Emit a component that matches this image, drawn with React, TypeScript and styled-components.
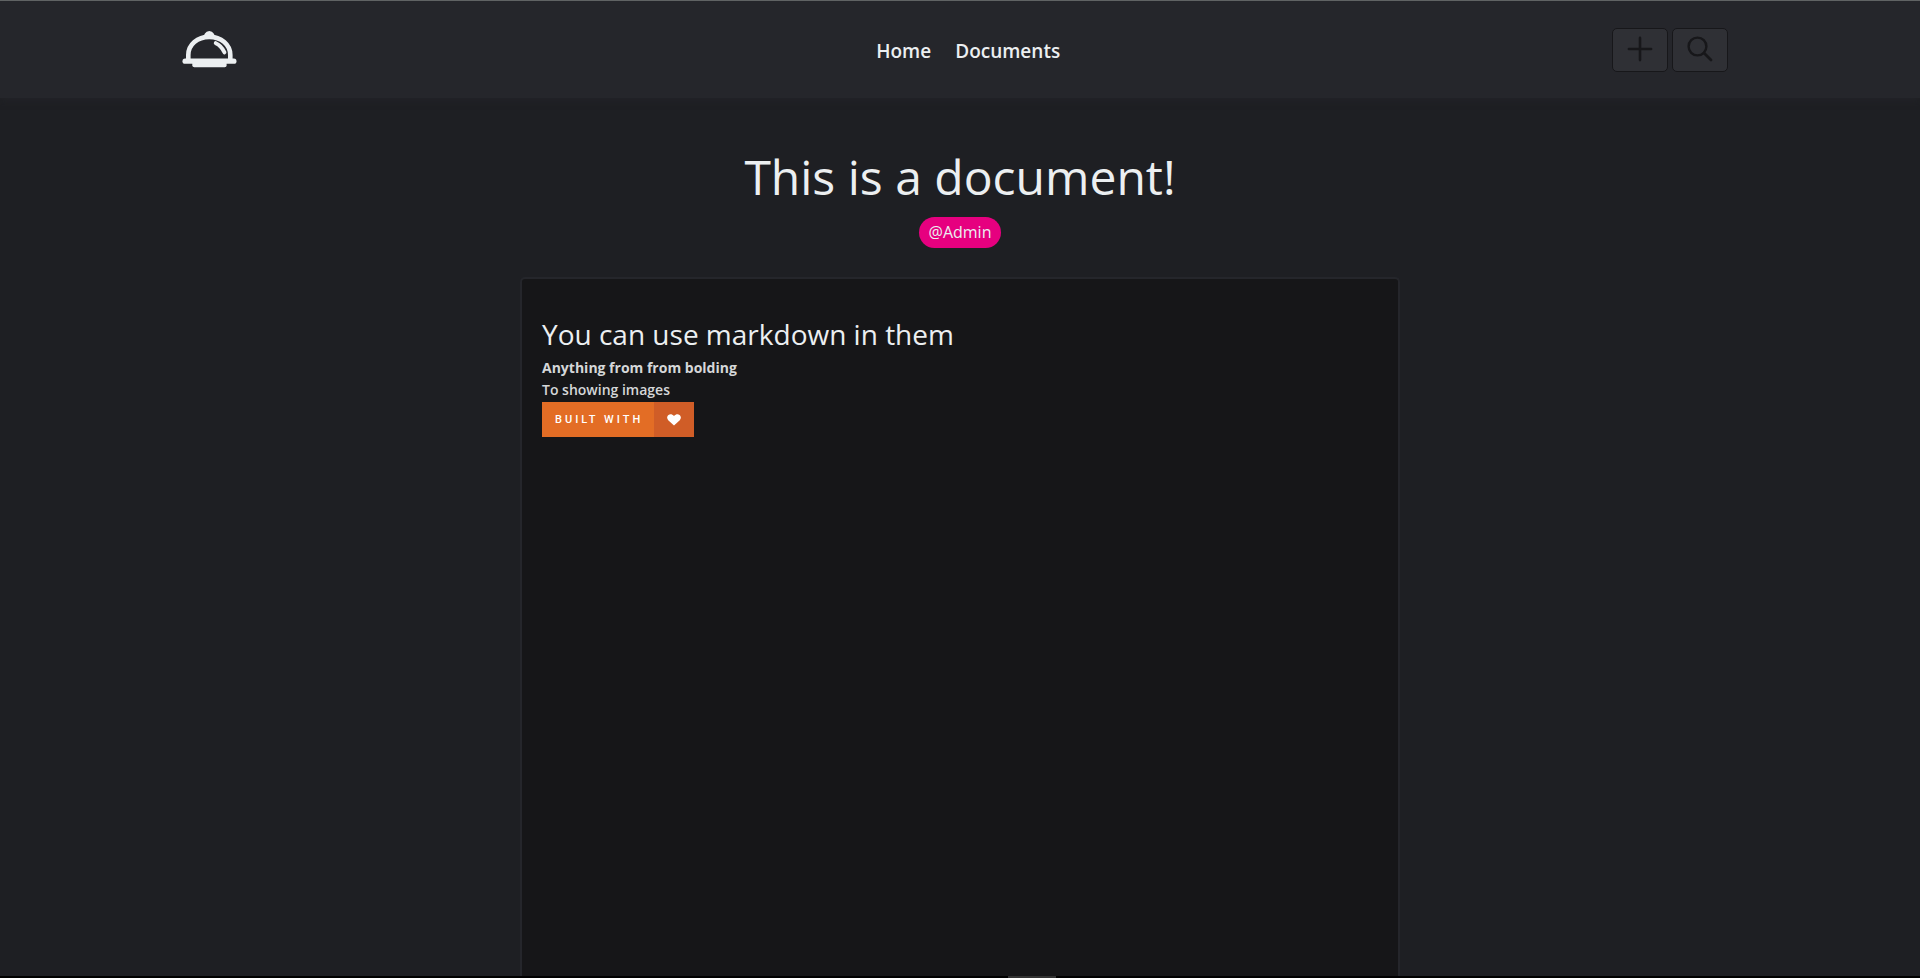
import React from "react";
import styled, { createGlobalStyle } from "styled-components";

const GlobalStyle = createGlobalStyle`
  *, *::before, *::after { box-sizing: border-box; }
  html, body { margin: 0; padding: 0; background: #1e1f23; }
  body {
    font-family: "Segoe UI", "Open Sans", "Noto Sans", sans-serif;
    font-size: 16px;
    color: #eceff1;
  }
  h1, h2, p { margin: 0; font-weight: 400; }
`;

const Page = styled.div`
  display: flex;
  flex-direction: column;
  min-height: 100vh;
`;

const Header = styled.header`
  display: grid;
  grid-template-columns: 1fr auto 1fr;
  align-items: center;
  height: 98px;
  padding: 0 10% 2px 9.5%;
  background: #25262b;
  border-top: 1px solid #606364;
  box-shadow: 0 0 8px #25262b;
`;

const LogoLink = styled.a`
  display: flex;
  justify-self: start;
  padding-top: 1px;
  color: #eceff1;
`;

const Nav = styled.nav`
  display: flex;
  gap: 24px;
  padding: 4px 0 0 26px;
`;

const NavLink = styled.a`
  color: #eceff1;
  font-size: 19px;
  font-weight: 600;
  line-height: 28px;
  text-decoration: none;
`;

const Actions = styled.div`
  display: flex;
  justify-self: end;
  gap: 4px;
  padding-top: 2px;
`;

const IconButton = styled.button`
  display: flex;
  align-items: center;
  justify-content: center;
  width: 56px;
  height: 44px;
  padding: 0 0 2px;
  color: #17171a;
  background: #2f3035;
  border: 1px solid #17171a;
  border-radius: 5px;
`;

const Main = styled.main`
  display: flex;
  flex: 1;
  flex-direction: column;
  align-items: center;
  padding-top: 44px;
`;

const Title = styled.h1`
  font-size: 48px;
  line-height: 70px;
`;

const AuthorTag = styled.a`
  margin-top: 5px;
  padding: 0 10px;
  color: #eceff1;
  background: #e6007f;
  border-radius: 16px;
  font-size: 16px;
  line-height: 31px;
  text-decoration: none;
`;

const Sheet = styled.article`
  display: flex;
  flex: 1;
  flex-direction: column;
  align-items: flex-start;
  width: 100%;
  max-width: 880px;
  margin-top: 29px;
  padding: 32px 20px 0;
  color: #d5d7d8;
  background: #161618;
  border: 2px solid #25262b;
  border-bottom: 0;
  border-radius: 5px 5px 0 0;
`;

const Heading = styled.h2`
  color: #eceff1;
  font-size: 28px;
  line-height: 46px;
`;

const Line = styled.p<{ $bold?: boolean }>`
  font-size: 14px;
  font-weight: ${(p) => (p.$bold ? 700 : 600)};
  line-height: 22px;
`;

const Badge = styled.div`
  display: flex;
  height: 35px;
  margin-top: 1px;
  color: #fff;
  background: #e36d25;
`;

const BadgeLabel = styled.span`
  width: 112px;
  padding-left: 13px;
  font-family: Roboto, sans-serif;
  font-size: 11px;
  font-weight: 500;
  letter-spacing: 3px;
  line-height: 36px;
  white-space: nowrap;
`;

const BadgeIcon = styled.span`
  display: flex;
  align-items: center;
  justify-content: center;
  width: 40px;
  background: #d05d27;
`;

const ScrollTrack = styled.div`
  display: flex;
  height: 2px;
  padding-left: 52.5%;
  background: #000;
`;

const ScrollThumb = styled.div`
  width: 48px;
  background: #333;
`;

const Cloche = () => (
  <svg width="55" height="38" viewBox="0 0 55 38" fill="none" aria-hidden="true">
    <path
      d="M6.3 30V25C6.3 14.5 15.5 6.9 27.3 6.9S48.3 14.5 48.3 25V30"
      stroke="currentColor"
      strokeWidth="4.6"
    />
    <path d="M21 6.2C22.2 5.7 22.4 4.6 22.9 3.6A5 5 0 0 1 31.7 3.6C32.2 4.6 32.4 5.7 33.6 6.2L32 9H22.6Z" fill="currentColor" />
    <path d="M33.8 13.2Q39.5 15.8 42.4 22.3" stroke="currentColor" strokeWidth="4" strokeLinecap="round" />
    <rect x="0.5" y="28.6" width="54" height="5.2" rx="2.6" fill="currentColor" />
    <path d="M10.3 32H44.6V35.2Q44.6 37.2 42.6 37.2H12.3Q10.3 37.2 10.3 35.2Z" fill="currentColor" />
  </svg>
);

const Plus = () => (
  <svg width="26" height="26" viewBox="0 0 26 26" stroke="currentColor" strokeWidth="2.6" strokeLinecap="round" aria-hidden="true">
    <path d="M13 1.9V24.1M1.9 13H24.1" />
  </svg>
);

const Search = () => (
  <svg width="26" height="26" viewBox="0 0 26 26" fill="none" stroke="currentColor" strokeWidth="2.4" aria-hidden="true">
    <circle cx="10.5" cy="10.5" r="8.9" />
    <path d="M17 17L24 24" strokeLinecap="round" strokeWidth="2.8" />
  </svg>
);

const Heart = () => (
  <svg width="14" height="12" viewBox="0 0 14 12" fill="currentColor" aria-hidden="true">
    <path d="M7 11.5L1.2 6.2C-.4 4.6-.1 1.9 1.5.9 3.2-.2 5.3.2 7 2 8.7.2 10.8-.2 12.5.9 14.1 1.9 14.4 4.6 12.8 6.2Z" />
  </svg>
);

export default function App() {
  return (
    <>
      <GlobalStyle />
      <Page>
        <Header>
          <LogoLink href="#" aria-label="Start">
            <Cloche />
          </LogoLink>
          <Nav>
            <NavLink href="#">Home</NavLink>
            <NavLink href="#">Documents</NavLink>
          </Nav>
          <Actions>
            <IconButton type="button" aria-label="New document">
              <Plus />
            </IconButton>
            <IconButton type="button" aria-label="Search">
              <Search />
            </IconButton>
          </Actions>
        </Header>
        <Main>
          <Title>This is a document!</Title>
          <AuthorTag href="#">@Admin</AuthorTag>
          <Sheet>
            <Heading>You can use markdown in them</Heading>
            <Line $bold>Anything from from bolding</Line>
            <Line>To showing images</Line>
            <Badge>
              <BadgeLabel>BUILT WITH</BadgeLabel>
              <BadgeIcon>
                <Heart />
              </BadgeIcon>
            </Badge>
          </Sheet>
        </Main>
        <ScrollTrack>
          <ScrollThumb />
        </ScrollTrack>
      </Page>
    </>
  );
}
